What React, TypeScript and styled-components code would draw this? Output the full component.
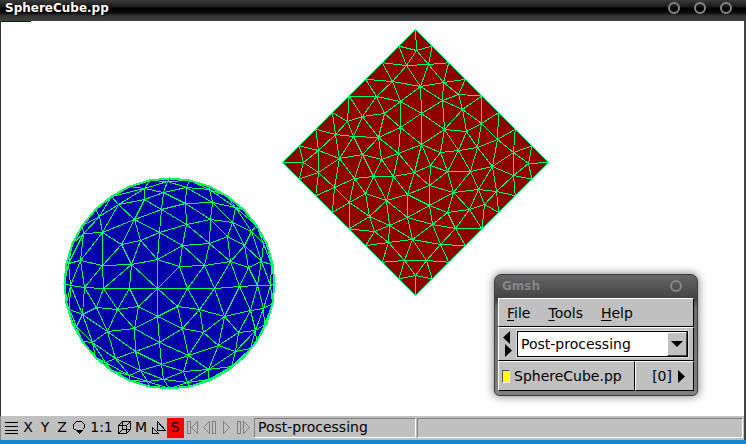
import React from "react";
import styled, { createGlobalStyle, css } from "styled-components";

const GlobalStyle = createGlobalStyle`
  *, *::before, *::after { box-sizing: border-box; }
  body { margin: 0; font: 14px/18px "DejaVu Sans", Verdana, sans-serif; color: #000; }
  button, select { font: inherit; color: inherit; }
`;

type Point = [number, number];
type Triangle = [number, number, number];

/* Upper faces of the convex hull of lifted points, found by exhaustive search. */
function upperHull(pts: number[][], visible: number): Triangle[] {
  const faces: Triangle[] = [];
  const n = pts.length;
  for (let i = 0; i < visible; i++) {
    for (let j = i + 1; j < visible; j++) {
      const ux = pts[j][0] - pts[i][0];
      const uy = pts[j][1] - pts[i][1];
      const uz = pts[j][2] - pts[i][2];
      if (ux * ux + uy * uy > 2500) continue;
      for (let k = j + 1; k < visible; k++) {
        const vx = pts[k][0] - pts[i][0];
        const vy = pts[k][1] - pts[i][1];
        const vz = pts[k][2] - pts[i][2];
        let nx = uy * vz - uz * vy;
        let ny = uz * vx - ux * vz;
        let nz = ux * vy - uy * vx;
        if (Math.abs(nz) < 1) continue;
        if (nz < 0) {
          nx = -nx;
          ny = -ny;
          nz = -nz;
        }
        let outer = true;
        for (let m = 0; m < n && outer; m++) {
          if (m === i || m === j || m === k) continue;
          const d =
            nx * (pts[m][0] - pts[i][0]) + ny * (pts[m][1] - pts[i][1]) + nz * (pts[m][2] - pts[i][2]);
          if (d > 0.001) outer = false;
        }
        if (outer) faces.push([i, j, k]);
      }
    }
  }
  return faces;
}

const meshPath = (pts: Point[], faces: Triangle[]) => {
  const seen = new Set<string>();
  let d = "";
  faces.forEach(([a, b, c]) => {
    [[a, b], [b, c], [a, c]].forEach(([p, q]) => {
      const key = `${p}-${q}`;
      if (seen.has(key)) return;
      seen.add(key);
      d += `M${pts[p].join(" ")}L${pts[q].join(" ")}`;
    });
  });
  return d;
};

const cubeInner: Point[] = [
  [416, 50], [406, 65], [392, 81], [376, 96], [400, 101], [384, 113], [362, 116], [347, 121],
  [335, 134], [353, 136], [378, 137], [400, 127], [318, 150], [339, 158], [362, 154], [381, 159],
  [398, 153], [303, 162], [428, 64], [420, 86], [443, 82], [458, 94], [442, 100], [462, 109],
  [421, 113], [481, 123], [444, 129], [466, 131], [497, 139], [421, 144], [477, 147], [458, 150],
  [440, 152], [513, 152], [528, 163], [318, 172], [334, 187], [354, 178], [373, 176], [393, 176],
  [414, 172], [349, 202], [365, 193], [386, 200], [407, 194], [369, 216], [407, 217], [389, 225],
  [374, 231], [412, 239], [388, 242], [404, 260], [415, 275], [430, 165], [447, 171], [470, 171],
  [492, 166], [513, 175], [429, 185], [453, 192], [478, 189], [496, 191], [429, 205], [447, 212],
  [469, 209], [484, 204], [432, 224], [455, 228], [440, 244], [426, 260],
];

const cubeCorners: Point[] = [[415, 29], [548, 162], [415, 295], [282, 162]];
const cubeEdge: Point[] = cubeCorners.flatMap((from, side) => {
  const to = cubeCorners[(side + 1) % 4];
  return Array.from({ length: 8 }, (_, i): Point => [
    from[0] + ((to[0] - from[0]) * i) / 8,
    from[1] + ((to[1] - from[1]) * i) / 8,
  ]);
});
const cubePoints = [...cubeInner, ...cubeEdge];
const cubePath = meshPath(
  cubePoints,
  upperHull(cubePoints.map(([x, y]) => [x, y, -((x - 416) ** 2 + (y - 163) ** 2) / 100]), cubePoints.length)
);

const sphereInner: Point[] = [
  [144, 188], [163, 192], [144, 199], [118, 204], [99, 216], [161, 209], [134, 219], [102, 232],
  [83, 233], [159, 232], [121, 244], [140, 240], [80, 260], [68, 263], [102, 265], [131, 264],
  [157, 259], [167, 181], [186, 187], [185, 203], [212, 202], [209, 189], [235, 207], [210, 219],
  [186, 224], [232, 222], [251, 231], [227, 236], [209, 243], [182, 245], [244, 245], [263, 243],
  [230, 261], [261, 261], [248, 267], [179, 266], [204, 265], [271, 264], [70, 285], [84, 287],
  [103, 288], [129, 288], [157, 288], [69, 309], [82, 314], [96, 307], [117, 309], [138, 306],
  [157, 316], [107, 331], [134, 328], [76, 326], [92, 342], [159, 342], [135, 351], [115, 358],
  [105, 362], [161, 364], [140, 370], [129, 375], [163, 379], [147, 381], [187, 288], [214, 288],
  [239, 286], [257, 285], [270, 285], [177, 306], [199, 309], [224, 316], [250, 310], [263, 308],
  [182, 328], [203, 332], [238, 332], [255, 330], [264, 324], [218, 345], [188, 355], [235, 351],
  [250, 348], [183, 371], [208, 369], [231, 366], [187, 382], [208, 379],
];
const RADIUS = 105;
const CENTER: Point = [169, 283];
const sphereRim: Point[] = Array.from({ length: 32 }, (_, i): Point => {
  const a = (i * Math.PI) / 16;
  return [Math.round(CENTER[0] + RADIUS * Math.cos(a)), Math.round(CENTER[1] + RADIUS * Math.sin(a))];
});
const spherePoints = [...sphereInner, ...sphereRim];
const sphereLift = spherePoints.map(([px, py]) => {
  const x = px - CENTER[0];
  const y = py - CENTER[1];
  const r = Math.hypot(x, y);
  const s = r > RADIUS ? RADIUS / r : 1;
  return [x * s, y * s, Math.sqrt(Math.max(0, RADIUS * RADIUS - r * r * s * s))];
});
const spherePath = meshPath(
  spherePoints,
  upperHull([...sphereLift, [0, 0, -RADIUS]], spherePoints.length)
);

const AppWindow = styled.main`
  display: flex;
  flex-direction: column;
  min-height: 100vh;
  background: #c0c0c0;
  border-bottom: 4px solid #1487d4;
`;

const TitleBar = styled.header`
  display: flex;
  align-items: center;
  justify-content: space-between;
  height: 21px;
  padding: 0 14px 5px 5px;
  background: linear-gradient(#3a3a3a 0, #1c1c1c 30%, #000 40%, #0c0c0c 60%, #333 75%, #404040 100%);
`;

const TitleText = styled.h1<{ $dim?: boolean }>`
  margin: 0;
  font-size: 12px;
  line-height: 16px;
  font-weight: bold;
  color: ${(p) => (p.$dim ? "#868686" : "#fff")};
  text-shadow: ${(p) => (p.$dim ? "none" : "1px 1px 1px #000")};
`;

const WindowButtons = styled.div`
  display: flex;
  gap: 14px;
`;

const RoundButton = styled.button`
  width: 12px;
  height: 12px;
  padding: 0;
  border: 2px solid #868686;
  border-radius: 50%;
  background: transparent;
`;

const Viewport = styled.section`
  position: relative;
  flex: 1;
  overflow: hidden;
  background: #fff;
  border-left: 1px solid #333;
  border-right: 2px solid #444;
`;

const Accent = styled.div`
  width: 30px;
  height: 1px;
  background: #0000c0;
`;

const Scene = styled.svg`
  display: block;
  shape-rendering: crispEdges;
`;

const Panel = styled.aside`
  position: absolute;
  left: 493px;
  top: 253px;
  width: 204px;
  padding: 0 3px 4px;
  background: linear-gradient(#666 0, #424242 24px, #6c6c6c 32px, #808080 100%);
  border: 1px solid #3c3c3c;
  border-radius: 7px 7px 5px 5px;
  box-shadow: 0 0 8px 1px rgba(0, 0, 0, 0.45);
`;

const PanelTitle = styled.header`
  display: flex;
  align-items: center;
  justify-content: space-between;
  height: 23px;
  padding: 0 12px 2px 4px;
`;

const raised = css`
  background: #c0c0c0;
  border: 1px solid;
  border-color: #fff #000 #000 #fff;
`;

const MenuBar = styled.nav`
  ${raised}
  display: flex;
  gap: 18px;
  height: 29px;
  padding: 0 8px;
`;

const MenuButton = styled.button`
  padding: 0;
  border: 0;
  background: none;

  &::first-letter {
    text-decoration: underline;
    text-decoration-thickness: 1px;
    text-underline-offset: 2px;
  }
`;

const ModuleRow = styled.div`
  ${raised}
  display: flex;
  height: 34px;
  padding: 3px 5px 3px 4px;
`;

const Arrows = styled.div`
  display: flex;
  flex-direction: column;
  width: 14px;
`;

const ArrowButton = styled.button<{ $next?: boolean }>`
  display: flex;
  flex: 1;
  align-items: center;
  padding: 0 0 0 ${(p) => (p.$next ? 2 : 0)}px;
  border: 0;
  background: none;
`;

const SelectBox = styled.label`
  position: relative;
  display: flex;
  flex: 1;
  background: #fff;
  border: 1px solid #000;
  outline: 1px solid #ddd;
`;

const ModuleSelect = styled.select`
  flex: 1;
  min-width: 0;
  padding: 0 20px 0 3px;
  border: 0;
  appearance: none;
  background: transparent;
`;

const SelectArrow = styled.span`
  ${raised}
  position: absolute;
  top: 0;
  right: 0;
  bottom: 0;
  display: flex;
  align-items: center;
  justify-content: center;
  width: 20px;
  border-right-color: #444;
  border-bottom-color: #444;
  pointer-events: none;
`;

const ViewRow = styled.div`
  display: flex;
  height: 30px;
`;

const ViewLabel = styled.label`
  ${raised}
  display: flex;
  flex: 1;
  align-items: center;
  gap: 4px;
  padding-left: 3px;
`;

const ViewCheck = styled.input`
  width: 8px;
  height: 13px;
  margin: 0;
  appearance: none;
  border: 1px solid;
  border-color: #555 #eee #eee #555;
  background: #c0c0c0;

  &:checked { background: #ff0; }
`;

const ViewOptions = styled.button`
  ${raised}
  display: flex;
  align-items: center;
  justify-content: flex-end;
  gap: 6px;
  width: 59px;
  padding: 0 8px 0 0;
`;

const StatusBar = styled.footer`
  display: flex;
  height: 24px;
  padding-left: 2px;
  border-left: 1px solid #888;
  border-right: 2px solid #444;
`;

const ToolButton = styled.button<{ $wide?: boolean; $active?: boolean }>`
  display: flex;
  align-items: center;
  justify-content: center;
  width: ${(p) => (p.$wide ? 28 : 17)}px;
  margin: 2px 0;
  padding: 0 1px 2px 0;
  border: 0;
  background: ${(p) => (p.$active ? "#f00" : "none")};
`;

const StatusField = styled.output<{ $grow?: boolean }>`
  ${(p) => (p.$grow ? "flex: 1;" : "width: 162px;")}
  margin: 2px 1px 2px 0;
  padding-left: 3px;
  line-height: 16px;
  border: 1px solid;
  border-color: #808080 #fff #fff #808080;
`;

const Fields = styled.div`
  display: flex;
  flex: 1;
  padding-left: 2px;
`;

const toolPaths: Record<string, string> = {
  menu: "M1 2.5H14M1 6.5H14M1 10.5H14M1 13.5H14",
  rotate: "M4.5 10.5L1.5 8.5V4.5L4.5 1.5H9.5L12.5 4.5V7.5L10.5 9.5",
  cube: "M1.5 5.5H9.5V13.5H1.5ZM5.5 1.5H13.5V9.5H5.5ZM1.5 5.5L5.5 1.5M9.5 5.5L13.5 1.5M9.5 13.5L13.5 9.5M1.5 13.5L5.5 9.5",
  axes: "M6.5 10.5V1.5L14.5 10.5ZM1.5 7.5V13.5H7.5ZM6.5 10.5L4.5 12.5",
  first: "M2.5 2V14M5.5 2V14M2 1.5H5.5M2 13.5H5.5M12.5 1.5V13.5L6.5 7.5Z",
  back: "M7.5 1.5V13.5L1.5 7.5ZM10.5 1.5H13.5V13.5H10.5Z",
  play: "M4.5 1.5V13.5L10.5 7.5Z",
  forward: "M1.5 1.5H4.5V13.5H1.5ZM7.5 1.5V13.5L13.5 7.5Z",
};

const ToolIcon = ({ name, dim }: { name: string; dim?: boolean }) => (
  <svg width="16" height="18" viewBox="-1 -2 16 18" fill="none" stroke={dim ? "#808080" : "#000"} shapeRendering="crispEdges" aria-hidden="true">
    <path d={toolPaths[name]} />
    {name === "rotate" && <path d="M5 10.5H10L7.5 13Z" fill="#000" />}
  </svg>
);

export default function App() {
  return (
    <>
      <GlobalStyle />
      <AppWindow>
        <TitleBar>
          <TitleText>SphereCube.pp</TitleText>
          <WindowButtons>
            <RoundButton aria-label="Minimize" />
            <RoundButton aria-label="Maximize" />
            <RoundButton aria-label="Close" />
          </WindowButtons>
        </TitleBar>
        <Viewport>
          <Accent />
          <Scene width="560" height="380" viewBox="1 22 560 380" role="img" aria-label="Sphere and cube meshes">
            <g transform="translate(0.5 0.5)" stroke="#00ff5f" strokeLinejoin="round">
              <polygon points={cubeCorners.join(" ")} fill="#8f0000" />
              <path d={cubePath} fill="none" />
              <polygon points={sphereRim.join(" ")} fill="#0000aa" strokeWidth="2" />
              <path d={spherePath} fill="none" />
            </g>
          </Scene>
          <Panel>
            <PanelTitle>
              <TitleText as="h2" $dim>Gmsh</TitleText>
              <RoundButton aria-label="Close Gmsh" />
            </PanelTitle>
            <MenuBar>
              <MenuButton>File</MenuButton>
              <MenuButton>Tools</MenuButton>
              <MenuButton>Help</MenuButton>
            </MenuBar>
            <ModuleRow>
              <Arrows>
                <ArrowButton aria-label="Previous module">
                  <svg width="7" height="13" viewBox="0 0 7 13"><path d="M7 0V13L0 6.5Z" /></svg>
                </ArrowButton>
                <ArrowButton $next aria-label="Next module">
                  <svg width="7" height="13" viewBox="0 0 7 13"><path d="M0 0V13L7 6.5Z" /></svg>
                </ArrowButton>
              </Arrows>
              <SelectBox>
                <ModuleSelect aria-label="Module" defaultValue="Post-processing">
                  <option>Post-processing</option>
                </ModuleSelect>
                <SelectArrow>
                  <svg width="12" height="6" viewBox="0 0 12 6"><path d="M0 0H12L6 6Z" /></svg>
                </SelectArrow>
              </SelectBox>
            </ModuleRow>
            <ViewRow>
              <ViewLabel>
                <ViewCheck type="checkbox" defaultChecked />
                SphereCube.pp
              </ViewLabel>
              <ViewOptions>
                [0]
                <svg width="7" height="13" viewBox="0 0 7 13" aria-hidden="true"><path d="M0 0V13L7 6.5Z" /></svg>
              </ViewOptions>
            </ViewRow>
          </Panel>
        </Viewport>
        <StatusBar>
          <ToolButton aria-label="Options"><ToolIcon name="menu" /></ToolButton>
          <ToolButton>X</ToolButton>
          <ToolButton>Y</ToolButton>
          <ToolButton>Z</ToolButton>
          <ToolButton aria-label="Rotate"><ToolIcon name="rotate" /></ToolButton>
          <ToolButton $wide>1:1</ToolButton>
          <ToolButton aria-label="Projection"><ToolIcon name="cube" /></ToolButton>
          <ToolButton>M</ToolButton>
          <ToolButton aria-label="Mesh visibility"><ToolIcon name="axes" /></ToolButton>
          <ToolButton $active>S</ToolButton>
          <ToolButton aria-label="First step"><ToolIcon name="first" dim /></ToolButton>
          <ToolButton aria-label="Step back"><ToolIcon name="back" dim /></ToolButton>
          <ToolButton aria-label="Play"><ToolIcon name="play" dim /></ToolButton>
          <ToolButton aria-label="Step forward"><ToolIcon name="forward" dim /></ToolButton>
          <Fields>
            <StatusField>Post-processing</StatusField>
            <StatusField $grow />
          </Fields>
        </StatusBar>
      </AppWindow>
    </>
  );
}
